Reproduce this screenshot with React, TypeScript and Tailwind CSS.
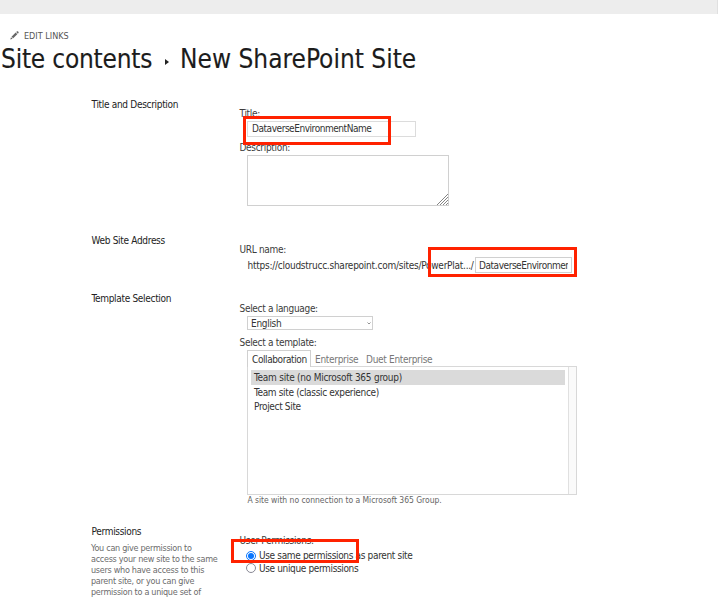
import React from "react";

function Section({ title, className, children, note }: { title: string; className: string; children: React.ReactNode; note?: React.ReactNode }) {
  return (
    <section className={`flex ${className}`}>
      <div className="w-[148px] shrink-0">
        <h2 className="h-[14px] pl-[0.5px] text-[10px] leading-[16px] tracking-[-0.31px] text-[#222]">{title}</h2>
        {note}
      </div>
      <div className="flex-1">{children}</div>
    </section>
  );
}

function Label({ children }: { children: React.ReactNode }) {
  return <div className="h-[14px] pl-[0.5px] text-[10px] leading-[16px] tracking-[-0.31px] text-[#3c3c3c]">{children}</div>;
}

export default function App() {
  return (
    <div className="relative h-[603px] w-[725px] overflow-hidden bg-white font-['DejaVu_Sans_Condensed','DejaVu_Sans',sans-serif] whitespace-nowrap text-[#333] [font-stretch:condensed]">
      <div className="h-[14px] w-[718px] border-r border-[#e0e0e0] bg-[#ededed]" />
      <div className="mt-[15px] flex h-[14px] items-center pl-[10px] text-[9px] text-[#555]">
        <svg width="9" height="9" viewBox="0 0 9 9" className="mr-[5px] mb-px">
          <path d="M0.3 8.5 1 6.2 2.7 7.8ZM1.5 5.7 5.7 1.6 7.3 3.2 3.2 7.3ZM6.2 1.1 7.1 0.3Q7.6 0 8.2 0.6 9 1.3 8.5 1.9L7.8 2.7Z" fill="#666" />
        </svg>
        <span className="pt-[2px]">EDIT LINKS</span>
      </div>
      <h1 className="flex h-[32px] items-center pl-px text-[26px] leading-[32px] text-[#1c1c1c] [-webkit-text-stroke:0.12px_#1c1c1c]">
        <span className="w-[151px] tracking-[-0.22px]">Site contents</span>
        <svg width="4" height="6" viewBox="0 0 4 6" className="mt-[6px] mr-[11px] ml-[13px]">
          <path d="M0 0 4 3 0 6Z" fill="#222" />
        </svg>
        <span>New SharePoint Site</span>
      </h1>

      <main className="pl-[91px]">
        <Section title="Title and Description" className="mt-[22px] h-[136px]">
          <div className="pt-[9px]">
            <Label>Title:</Label>
            <div className="mt-px ml-[8px] flex h-[16px] w-[169px] items-center border border-[#dcdcdc] pb-px pl-[4px] text-[10px] tracking-[-0.45px]">DataverseEnvironmentName</div>
            <div className="mt-[3px]"><Label>Description:</Label></div>
            <div className="mt-px ml-[8px] flex h-[51px] w-[202px] items-end justify-end border border-[#d0d0d0]">
              <svg width="11" height="11" viewBox="0 0 11 11">
                <path d="M0 11 11 0M3 11 11 3M6 11 11 6M9 11 11 9" stroke="#777" strokeWidth="0.9" />
              </svg>
            </div>
          </div>
        </Section>

        <Section title="Web Site Address" className="h-[58px]">
          <div className="pt-[9px]">
            <Label>URL name:</Label>
            <div className="ml-[8px] flex h-[17px] items-center text-[10px]">
              <span className="w-[228px] pt-px pl-[0.5px] tracking-[-0.25px]">https://cloudstrucc.sharepoint.com/sites/PowerPlat.../</span>
              <div className="flex h-[16px] w-[97px] items-center border border-[#d0d0d0] px-[3px]">
                <span className="w-[89px] overflow-hidden pt-px tracking-[-0.45px]">DataverseEnvironmen</span>
              </div>
            </div>
          </div>
        </Section>

        <Section title="Template Selection" className="h-[233px]">
          <div className="pt-[10px]">
            <Label>Select a language:</Label>
            <div className="mt-px ml-[8px] flex h-[14px] w-[126px] items-center justify-between border border-[#d0d0d0] pr-px pl-[3px] text-[10px] tracking-[-0.3px]">
              English
              <svg width="4" height="3" viewBox="0 0 4 3"><path d="M0.5 0.5 2 2 3.5 0.5" fill="none" stroke="#777" strokeWidth="0.8" /></svg>
            </div>
            <div className="mt-[5px]"><Label>Select a template:</Label></div>
            <div className="mt-px ml-[8px] flex h-[16px] text-[10px] leading-[18px] tracking-[-0.3px] text-[#777]">
              <span className="relative z-10 h-[17px] w-[64px] border border-b-0 border-[#d0d0d0] bg-white pl-[4px] leading-[17px] tracking-[-0.4px] text-[#333]">Collaboration</span>
              <span className="w-[51px] pt-px pl-[4px]">Enterprise</span>
              <span className="pt-px pl-[4px]">Duet Enterprise</span>
            </div>
            <div className="ml-[8px] flex h-[129px] w-[330px] border border-[#d8d8d8]">
              <ul className="w-[320px] pt-[3px] pl-[3px] text-[10px] leading-[15px] tracking-[-0.34px]">
                <li className="h-[15px] w-[314px] bg-[#dadada] pl-[3px] tracking-[-0.25px]">Team site (no Microsoft 365 group)</li>
                <li className="h-[15px] pl-[3px]">Team site (classic experience)</li>
                <li className="h-[15px] pl-[3px] leading-[14px]">Project Site</li>
              </ul>
              <div className="flex-1 border-l border-[#e0e0e0] bg-[#fafafa]" />
            </div>
            <div className="ml-[8px] h-[12px] pl-[0.5px] text-[8.5px] leading-[11px] tracking-[-0.04px] text-[#666]">A site with no connection to a Microsoft 365 Group.</div>
          </div>
        </Section>

        <Section
          title="Permissions"
          className="h-[80px]"
          note={
            <p className="mt-[5px] text-[9px] leading-[11px] tracking-[-0.29px] text-[#6c6c6c]">
              You can give permission to<br />access your new site to the same<br />users who have access to this<br />parent site, or you can give<br />permission to a unique set of
            </p>
          }
        >
          <div className="pt-[9px]">
            <Label>User Permissions:</Label>
            <div className="ml-[7px] flex h-[14px] items-center gap-[3px] pt-[3px] text-[10px] tracking-[-0.34px]">
              <span className="flex size-[10px] items-center justify-center rounded-full border border-[#0876ff] bg-white"><i className="size-[6px] rounded-full bg-[#0876ff]" /></span>
              Use same permissions as parent site
            </div>
            <div className="ml-[7px] flex h-[14px] items-center gap-[3px] text-[10px] tracking-[-0.36px]">
              <span className="size-[10px] rounded-full border border-[#888894] bg-white" />
              Use unique permissions
            </div>
          </div>
        </Section>
      </main>

      <div className="absolute top-[116px] left-[243px] z-20 h-[29px] w-[148px] border-[3px] border-[#ff2200]" />
      <div className="absolute top-[247px] left-[428px] z-20 h-[30px] w-[149px] border-[3px] border-[#ff2200]" />
      <div className="absolute top-[539px] left-[231px] z-20 h-[24px] w-[128px] border-[3px] border-[#ff2200]" />
    </div>
  );
}
